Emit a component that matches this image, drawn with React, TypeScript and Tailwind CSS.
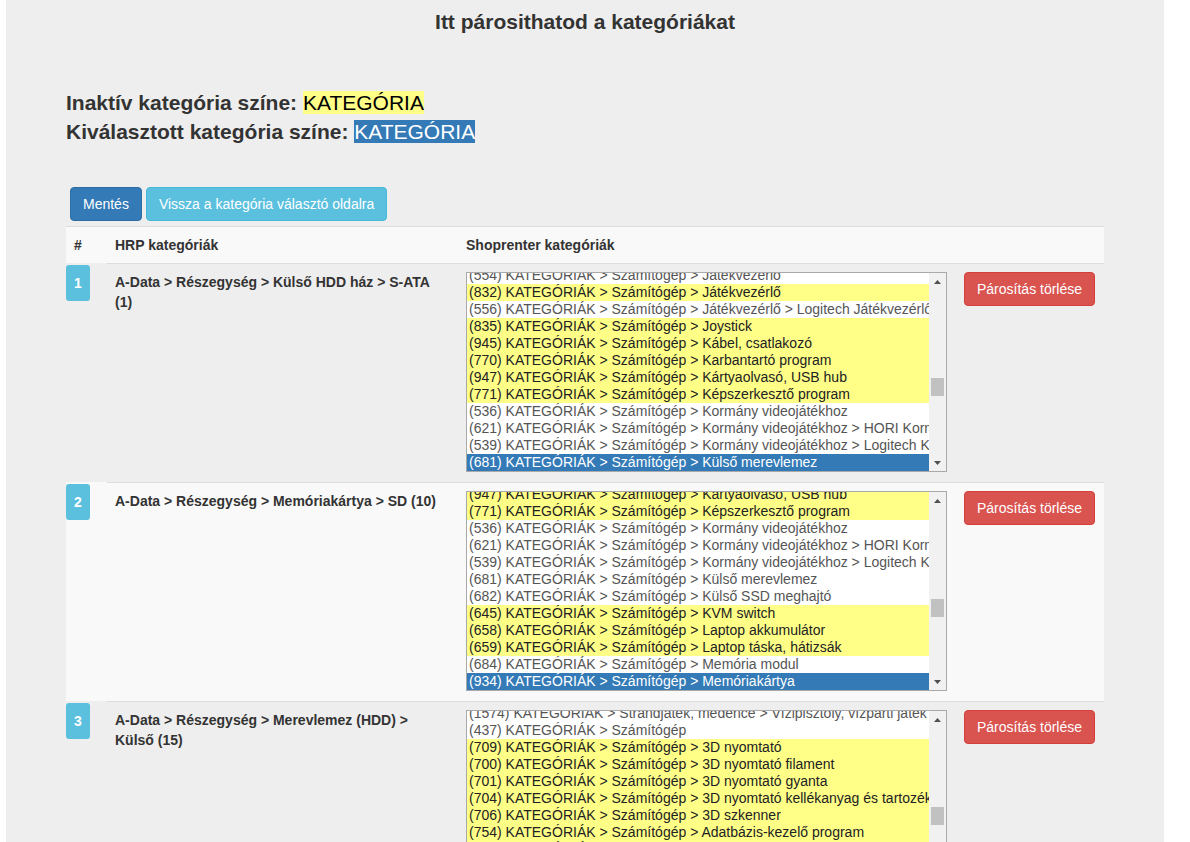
type Opt = { id: string; text: string; kind: "w" | "y" | "s" };

const K = "KATEGÓRIÁK > Számítógép > ";

const rows: { n: number; hrp: string; striped: boolean; thumb: string; opts: Opt[] }[] = [
  {
    n: 1,
    hrp: "A-Data > Részegység > Külső HDD ház > S-ATA (1)",
    striped: false,
    thumb: "mt-[88px]",
    opts: [
      { id: "554", text: K + "Játékvezérlő", kind: "w" },
      { id: "832", text: K + "Játékvezérlő", kind: "y" },
      { id: "556", text: K + "Játékvezérlő > Logitech Játékvezérlő", kind: "w" },
      { id: "835", text: K + "Joystick", kind: "y" },
      { id: "945", text: K + "Kábel, csatlakozó", kind: "y" },
      { id: "770", text: K + "Karbantartó program", kind: "y" },
      { id: "947", text: K + "Kártyaolvasó, USB hub", kind: "y" },
      { id: "771", text: K + "Képszerkesztő program", kind: "y" },
      { id: "536", text: K + "Kormány videojátékhoz", kind: "w" },
      { id: "621", text: K + "Kormány videojátékhoz > HORI Kormány", kind: "w" },
      { id: "539", text: K + "Kormány videojátékhoz > Logitech Kormány", kind: "w" },
      { id: "681", text: K + "Külső merevlemez", kind: "s" },
    ],
  },
  {
    n: 2,
    hrp: "A-Data > Részegység > Memóriakártya > SD (10)",
    striped: true,
    thumb: "mt-[90px]",
    opts: [
      { id: "947", text: K + "Kártyaolvasó, USB hub", kind: "y" },
      { id: "771", text: K + "Képszerkesztő program", kind: "y" },
      { id: "536", text: K + "Kormány videojátékhoz", kind: "w" },
      { id: "621", text: K + "Kormány videojátékhoz > HORI Kormány", kind: "w" },
      { id: "539", text: K + "Kormány videojátékhoz > Logitech Kormány", kind: "w" },
      { id: "681", text: K + "Külső merevlemez", kind: "w" },
      { id: "682", text: K + "Külső SSD meghajtó", kind: "w" },
      { id: "645", text: K + "KVM switch", kind: "y" },
      { id: "658", text: K + "Laptop akkumulátor", kind: "y" },
      { id: "659", text: K + "Laptop táska, hátizsák", kind: "y" },
      { id: "684", text: K + "Memória modul", kind: "w" },
      { id: "934", text: K + "Memóriakártya", kind: "s" },
    ],
  },
  {
    n: 3,
    hrp: "A-Data > Részegység > Merevlemez (HDD) > Külső (15)",
    striped: false,
    thumb: "mt-[79px]",
    opts: [
      { id: "1574", text: "KATEGÓRIÁK > Strandjáték, medence > Vízipisztoly, vízparti játék", kind: "w" },
      { id: "437", text: "KATEGÓRIÁK > Számítógép", kind: "w" },
      { id: "709", text: K + "3D nyomtató", kind: "y" },
      { id: "700", text: K + "3D nyomtató filament", kind: "y" },
      { id: "701", text: K + "3D nyomtató gyanta", kind: "y" },
      { id: "704", text: K + "3D nyomtató kellékanyag és tartozékok", kind: "y" },
      { id: "706", text: K + "3D szkenner", kind: "y" },
      { id: "754", text: K + "Adatbázis-kezelő program", kind: "y" },
      { id: "755", text: K + "Antivírus program", kind: "y" },
      { id: "756", text: K + "Asztali számítógép", kind: "y" },
      { id: "757", text: K + "Billentyűzet", kind: "y" },
      { id: "758", text: K + "Billentyűzet és egér szett", kind: "y" },
    ],
  },
];

const optClass = {
  w: "bg-white text-[#555]",
  y: "bg-[#ffff88] text-[#222]",
  s: "bg-[#337ab7] text-white",
};

function Arrow({ down }: { down?: boolean }) {
  return (
    <div className="flex h-[17px] items-center justify-center">
      <svg width="7" height="4" viewBox="0 0 7 4">
        <path d={down ? "M0 0 L7 0 L3.5 4 Z" : "M0 4 L3.5 0 L7 4 Z"} fill="#505050" />
      </svg>
    </div>
  );
}

function FakeSelect({ opts, thumb }: { opts: Opt[]; thumb: string }) {
  return (
    <div className="flex h-[200px] w-[481px] overflow-hidden border border-[#a9a9a9] bg-white">
      <div className="min-w-0 flex-1 overflow-hidden">
        <div className="-mt-[6px]">
          {opts.map((o, i) => (
            <div
              key={i}
              className={`h-[17px] overflow-hidden whitespace-nowrap pl-[2px] text-[14px] leading-[17px] ${optClass[o.kind]}`}
            >
              ({o.id}) {o.text}
            </div>
          ))}
        </div>
      </div>
      <div className="flex w-[17px] flex-col bg-[#f1f1f1]">
        <Arrow />
        <div className="flex-1">
          <div className={`${thumb} mx-[2px] h-[18px] bg-[#c1c1c1]`} />
        </div>
        <Arrow down />
      </div>
    </div>
  );
}

export default function App() {
  return (
    <div className="min-h-screen bg-white pl-[6px] font-['Liberation_Sans',Arial,sans-serif] text-[#333]">
      <div className="w-[1158px] bg-[#eeeeee] pb-10 pt-[10px]">
        <h3 className="text-center text-[21px] font-bold leading-[23px]">Itt párosithatod a kategóriákat</h3>

        <div className="mt-[55px] pl-[60px] text-[21px] font-bold leading-[29px]">
          <div>
            Inaktív kategória színe: <span className="bg-[#ffff88] font-normal text-black">KATEGÓRIA</span>
          </div>
          <div>
            Kiválasztott kategória színe: <span className="bg-[#337ab7] font-normal text-white">KATEGÓRIA</span>
          </div>
        </div>

        <div className="ml-[64px] mt-[41px] flex gap-1 text-[14px] leading-[20px]">
          <button className="rounded-[4px] border border-[#2e6da4] bg-[#337ab7] px-3 py-[6px] text-white">Mentés</button>
          <button className="rounded-[4px] border border-[#46b8da] bg-[#5bc0de] px-3 py-[6px] text-white">
            Vissza a kategória választó oldalra
          </button>
        </div>

        <div className="ml-[60px] mt-[5px] w-[1038px] text-[14px] leading-[20px]">
          <div className="grid grid-cols-[41px_351px_498px_148px] border-t border-[#dddddd] bg-[#f9f9f9] font-bold">
            <div className="px-2 py-2">#</div>
            <div className="p-2">HRP kategóriák</div>
            <div className="p-2">Shoprenter kategóriák</div>
            <div />
          </div>

          {rows.map((r) => (
            <div
              key={r.n}
              className={`grid grid-cols-[41px_351px_498px_148px] ${r.striped ? "bg-[#f9f9f9]" : ""}`}
            >
              <div className="border-t border-transparent">
                <div className="mt-[1px] flex h-[36px] w-[24px] items-center justify-center rounded-[3px] bg-[#5bc0de] font-bold text-white">
                  {r.n}
                </div>
              </div>
              <div className="border-t border-[#dddddd] px-2 pb-[10px] pt-2 font-bold">{r.hrp}</div>
              <div className="border-t border-[#dddddd] px-2 pb-[10px] pt-2">
                <FakeSelect opts={r.opts} thumb={r.thumb} />
              </div>
              <div className="border-t border-[#dddddd] px-2 pb-[10px] pt-2">
                <button className="rounded-[4px] border border-[#d43f3a] bg-[#d9534f] px-3 py-[6px] text-white">
                  Párosítás törlése
                </button>
              </div>
            </div>
          ))}
        </div>
      </div>
    </div>
  );
}
